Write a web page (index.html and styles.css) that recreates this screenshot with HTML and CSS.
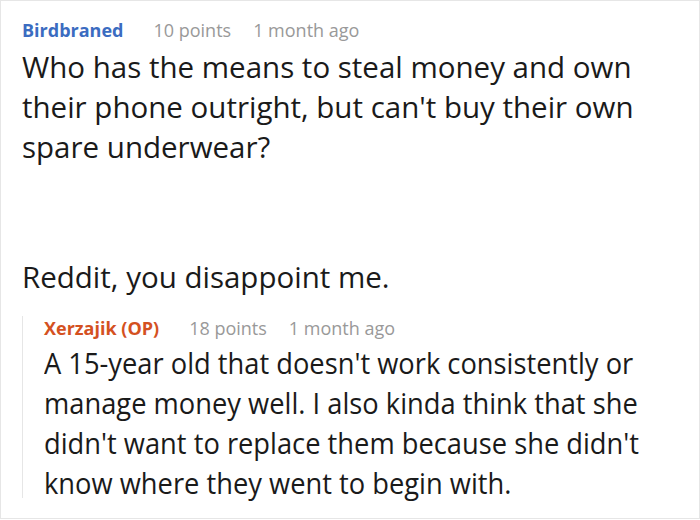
FILE: index.html
```html
<!DOCTYPE html>
<html>
<head>
<meta charset="utf-8">
<link rel="stylesheet" href="styles.css">
</head>
<body>
<div class="thread">
  <div class="comment">
    <div class="meta">
      <span class="author author-blue">Birdbraned</span>
      <span class="info">10 points</span>
      <span class="info">1 month ago</span>
    </div>
    <div class="body">
      <p>Who has the means to steal money and own their phone outright, but can't buy their own spare underwear?</p>
      <p class="gap">Reddit, you disappoint me.</p>
    </div>
    <div class="reply">
      <div class="meta meta-reply">
        <span class="author author-op">Xerzajik (OP)</span>
        <span class="info">18 points</span>
        <span class="info">1 month ago</span>
      </div>
      <div class="body body-condensed">
        <p>A 15-year old that doesn't work consistently or manage money well. I also kinda think that she didn't want to replace them because she didn't know where they went to begin with.</p>
      </div>
    </div>
  </div>
</div>
</body>
</html>
```

FILE: styles.css
```css
html, body {
  margin: 0;
  padding: 0;
  background: #ffffff;
}
.thread {
  width: 700px;
  height: 519px;
  box-sizing: border-box;
  border: 1px solid #e6e6e6;
  overflow: hidden;
  font-family: "Open Sans", "Noto Sans", sans-serif;
  color: #1a1a1a;
}
.comment {
  padding: 17px 21px 0 21px;
}
.meta {
  display: flex;
  font-size: 18px;
  line-height: 24px;
  white-space: nowrap;
}
.author {
  font-weight: 700;
  margin-right: 30px;
}
.author-blue { color: #3b6cc1; }
.author-op { color: #d4511f; }
.info {
  color: #999999;
  margin-right: 22px;
}
.body {
  font-size: 29.5px;
  line-height: 40px;
  margin-top: 5px;
}
.body p {
  margin: 0;
}
.body .gap {
  margin-top: 90px;
}
.reply {
  margin-top: 23px;
  border-left: 1px solid #e6e6e6;
  padding-left: 21px;
  height: 182px;
}
.meta-reply {
  margin-top: -4px;
}
.body-condensed {
  margin-top: 3px;
  width: 690px;
  transform: scaleX(0.925);
  transform-origin: left top;
}
```
